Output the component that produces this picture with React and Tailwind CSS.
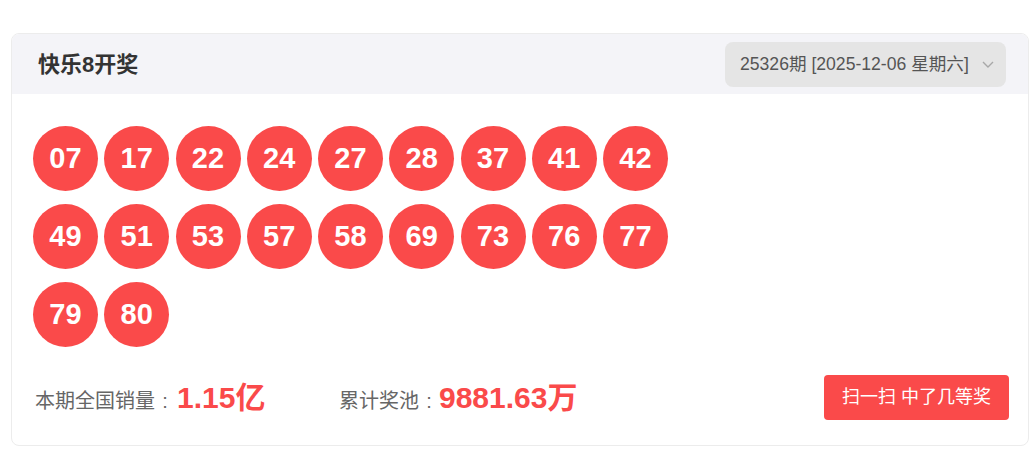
import React from "react";

const balls = ["07","17","22","24","27","28","37","41","42","49","51","53","57","58","69","73","76","77","79","80"];

export default function App() {
  return (
    <div className="pt-[33px] pl-[11px] bg-white min-h-[455px]" style={{ fontFamily: '"Liberation Sans", "Noto Sans CJK SC", sans-serif' }}>
      <div className="w-[1018px] h-[413px] border border-[#ececec] rounded-lg overflow-hidden bg-white">
        <div className="h-[60px] bg-[#f4f4f8] flex items-center justify-between pl-[26px] pr-[22px]">
          <div className="text-[22px] font-bold text-[#333]">快乐8开奖</div>
          <div className="w-[281px] h-[45px] bg-[#e5e5e5] rounded-lg flex items-center justify-between pl-[15px] pr-[11px]">
            <span className="text-[17.6px] text-[#555]">25326期 [2025-12-06 星期六]</span>
            <svg width="14" height="10" viewBox="0 0 14 10" fill="none">
              <polyline points="2,3 7,8 12,3" stroke="#a8a8a8" strokeWidth="1.4" fill="none" />
            </svg>
          </div>
        </div>
        <div className="pt-[32px] pl-[21px] pr-[19px]">
          <div className="w-[650px] flex flex-wrap gap-x-[6.25px] gap-y-[13px]">
            {balls.map((b) => (
              <div key={b} className="w-[65px] h-[65px] rounded-full bg-[#fa4a4a] flex items-center justify-center text-white font-bold text-[29px]">
                {b}
              </div>
            ))}
          </div>
          <div className="mt-[28px] flex items-center justify-between">
            <div className="flex items-center">
              <div className="flex items-baseline pl-[2px] w-[306px]">
                <span className="text-[20px] text-[#666]">本期全国销量</span>
                <span className="text-[20px] text-[#666] inline-block w-[20px] text-center">:</span>
                <span className="text-[30px] font-bold text-[#fa4a4a] ml-[2px]">1.15亿</span>
              </div>
              <div className="flex items-baseline">
                <span className="text-[20px] text-[#666]">累计奖池</span>
                <span className="text-[20px] text-[#666] inline-block w-[20px] text-center">:</span>
                <span className="text-[30px] font-bold text-[#fa4a4a]">9881.63万</span>
              </div>
            </div>
            <div className="w-[185px] h-[45px] bg-[#fa4a4a] rounded-[4px] text-white text-[18px] flex items-center justify-center">
              扫一扫 中了几等奖
            </div>
          </div>
        </div>
      </div>
    </div>
  );
}
